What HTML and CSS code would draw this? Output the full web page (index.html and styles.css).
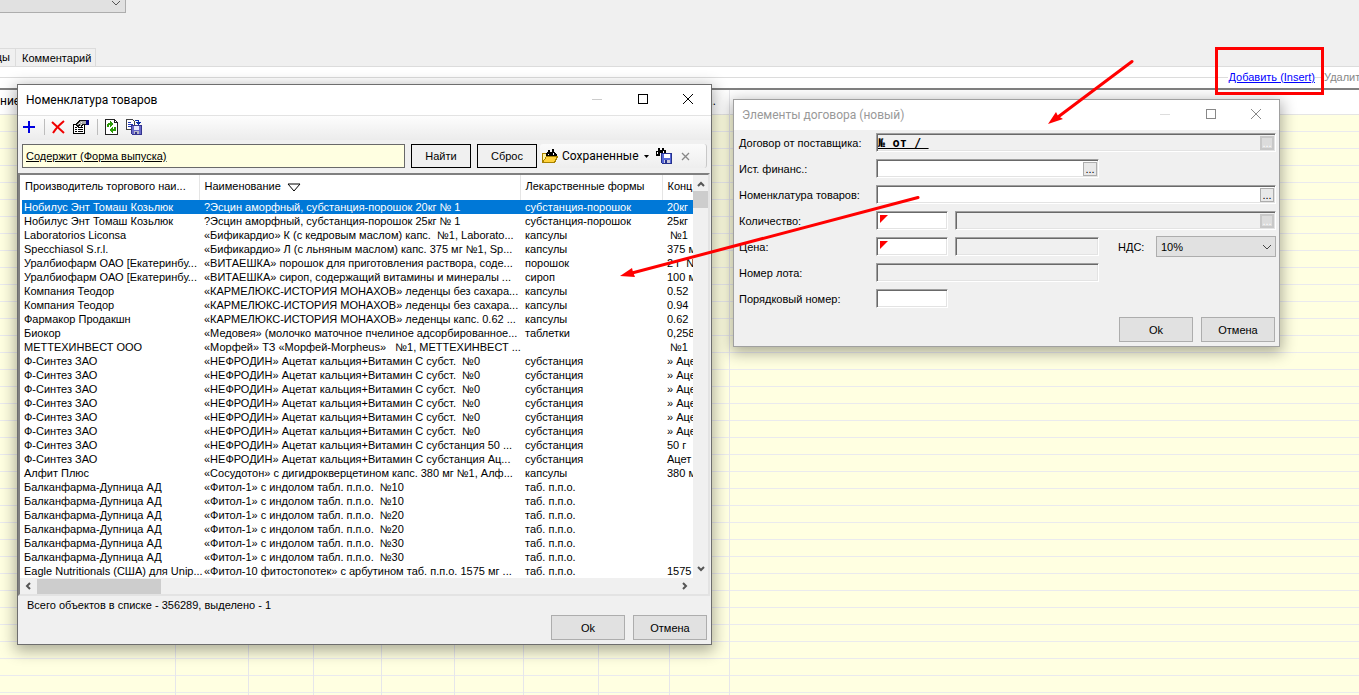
FILE: index.html
```
<!DOCTYPE html>
<html lang="ru">
<head>
<meta charset="utf-8">
<title>Номенклатура товаров</title>
<link rel="stylesheet" href="styles.css">
</head>
<body>
<main class="desktop">
  <header class="top">
    <button class="top-combo" type="button" aria-label="Список">
      <svg width="10" height="6" viewBox="0 0 10 6"><path d="M1 1l4 4 4-4" fill="none" stroke="#555"/></svg>
    </button>
    <nav class="tabs">
      <button class="tab tab-cut" type="button">цы</button>
      <button class="tab" type="button">Комментарий</button>
    </nav>
  </header>
  <div class="actions">
    <a class="add" href="#">Добавить (Insert)</a>
    <button class="remove" type="button" disabled>Удалить</button>
  </div>
  <section class="sheet">
    <div class="col c1"><div class="col-head">ние</div></div>
    <div class="col c2"><div class="col-head"></div></div>
    <div class="col c3"><div class="col-head"></div></div>
    <div class="col c4"><div class="col-head"></div></div>
    <div class="col c5"><div class="col-head"></div></div>
    <div class="col c6"><div class="col-head"></div></div>
    <div class="col c7"><div class="col-head"></div></div>
    <div class="col c8"><div class="col-head"></div></div>
    <div class="col c9"><div class="col-head">...</div></div>
    <div class="col rest"><div class="col-head"></div></div>
  </section>

  <section class="window catalog">
    <div class="title">
      <h1>Номенклатура товаров</h1>
      <svg class="controls" width="104" height="12" viewBox="0 0 104 12" fill="none" shape-rendering="crispEdges">
        <path d="M0 5.500h10" stroke="#ccc"/><rect x="46.500" y="0.500" width="9" height="9" stroke="#000"/>
        <path d="M91 0l10 10M101 0L91 10" stroke="#000" shape-rendering="auto"/>
      </svg>
    </div>
    <div class="toolbar">
      <button type="button" class="tool" aria-label="Добавить"><svg width="16" height="16" viewBox="0 0 16 16"><path d="M7 2h2v5h5v2H9v5H7V9H2V7h5z" fill="#0000e0"/></svg></button>
      <span class="sep"></span>
      <button type="button" class="tool" aria-label="Удалить"><svg width="16" height="16" viewBox="0 0 16 16"><path d="M2 3l12 11M14 2C9 6 6 9 3 14" fill="none" stroke="#f00000" stroke-width="2"/></svg></button>
      <button type="button" class="tool" aria-label="Свойства"><svg width="18" height="16" viewBox="0 0 18 16" shape-rendering="crispEdges"><path d="M1.500 5.500h11v9h-11z" fill="#fff" stroke="#000"/><path d="M3 8h2M6 8h5M3 10h2M6 10h5M3 12h2M6 12h5" stroke="#000" transform="translate(0 .5)"/><path d="M4 5l4-4h6v5h-3l-2 2-1-2-2 2z" fill="#aaa"/><path d="M4 5.500l4-4h6M4 5.500L6 7.500l2-2M9 7.500l2-2h3" fill="none" stroke="#111"/><path d="M7 4h1v1H7zM9 3h1v1H9zM9 5h1v1H9z" fill="#eee"/><path d="M14 1h3v5h-3z" fill="#000080"/></svg></button>
      <span class="sep"></span>
      <button type="button" class="tool" aria-label="Обновить"><svg width="16" height="16" viewBox="0 0 16 16" shape-rendering="crispEdges"><path d="M2.500.5h9l3 3v12h-12z" fill="#fff" stroke="#222"/><path d="M11.500.5v3h3" fill="none" stroke="#222"/><path d="M4 8V5l1-1h2V2l4 3-4 3V6H6v2zM13 8v3l-1 1h-2v2l-4-3 4-3v2h1V8z" fill="#2c9a08"/></svg></button>
      <button type="button" class="tool" aria-label="Экспорт"><svg width="18" height="16" viewBox="0 0 18 16" shape-rendering="crispEdges"><path d="M1.500.5h6l2 2v8h-8z" fill="#fff" stroke="#444"/><path d="M3 3.500h3M3 5.500h5M3 7.500h5" stroke="#2238b8"/><path d="M10 1.500h3v2" fill="none" stroke="#0b2ca8"/><path d="M11 3h5l-2.500 3z" fill="#0b2ca8"/><path d="M6.500 6.500h10v9h-9l-1-1z" fill="#6868c8" stroke="#34348e"/><path d="M9 7h5v4H9z" fill="#e8e8ff"/><path d="M9 12h5v3H9z" fill="#b8b8c8"/><path d="M10 13h2v2h-2z" fill="#34348e"/></svg></button>
    </div>
    <div class="filter">
      <button class="criteria" type="button">Содержит (Форма выпуска)</button>
      <button class="flat" type="button">Найти</button>
      <button class="flat" type="button">Сброс</button>
      <div class="saved-strip">
        <button class="saved" type="button"><svg width="16" height="16" viewBox="0 0 16 16" shape-rendering="crispEdges"><path d="M0.500 14.500v-9h4l1 1h4v3" fill="#fff2a0" stroke="#a88200"/><path d="M5 4h1V2h2v2h2V1h2v3h1l2 3v2H4V6z" fill="#000"/><path d="M6 6h1v1H6zM11 5h1v2h-1z" fill="#fff"/><path d="M.5 14.500l4-6h11l-3 6z" fill="#ffd23c" stroke="#a88200"/></svg><span>Сохраненные</span><svg width="5" height="3" viewBox="0 0 5 3"><path d="M0 0h5L2.500 3z"/></svg></button>
        <button class="tool" type="button" aria-label="Сохранить поиск"><svg width="18" height="16" viewBox="0 0 18 16" shape-rendering="crispEdges"><path d="M2 0h2v2h2V0h2v2h2v5H6V5H4v3H0V3h2z" fill="#000"/><path d="M1 4h1v2H1zM7 3h1v2H7z" fill="#fff"/><path d="M5.500 5.500h10v10h-9l-1-1z" fill="#5668d8" stroke="#26328e"/><path d="M8 6h6v4H8z" fill="#fff"/><path d="M8 12h6v3H8z" fill="#ccd"/><path d="M9 12h2v3H9z" fill="#26328e"/></svg></button>
        <button class="tool" type="button" aria-label="Очистить"><svg width="9" height="9" viewBox="0 0 9 9"><path d="M1 1l7 7M8 1L1 8" fill="none" stroke="#888" stroke-width="1.300"/></svg></button>
      </div>
    </div>
    <div class="list">
      <div class="list-view">
        <table>
          <colgroup><col class="k1"><col class="k2"><col class="k3"><col></colgroup>
          <thead><tr><th>Производитель торгового наи...</th><th>Наименование <svg width="14" height="9" viewBox="0 0 14 9"><path d="M1 1h12L7 8z" fill="#fff" stroke="#000"/></svg></th><th>Лекарственные формы</th><th>Конц</th></tr></thead>
          <tbody>
<tr class="selected"><td>Нобилус Энт Томаш Козьлюк</td><td>?Эсцин аморфный, субстанция-порошок 20кг № 1</td><td>субстанция-порошок</td><td>20кг</td></tr>
<tr><td>Нобилус Энт Томаш Козьлюк</td><td>?Эсцин аморфный, субстанция-порошок 25кг № 1</td><td>субстанция-порошок</td><td>25кг</td></tr>
<tr><td>Laboratorios Liconsa</td><td>«Бификардио» К (с кедровым маслом) капс.  №1, Laborato...</td><td>капсулы</td><td> №1</td></tr>
<tr><td>Specchiasol S.r.l.</td><td>«Бификардио» Л (с льняным маслом) капс. 375 мг №1, Sp...</td><td>капсулы</td><td>375 м</td></tr>
<tr><td>Уралбиофарм ОАО [Екатеринбу...</td><td>«ВИТАЕШКА» порошок для приготовления раствора, соде...</td><td>порошок</td><td>2 г  N</td></tr>
<tr><td>Уралбиофарм ОАО [Екатеринбу...</td><td>«ВИТАЕШКА» сироп, содержащий витамины и минералы ...</td><td>сироп</td><td>100 м</td></tr>
<tr><td>Компания Теодор</td><td>«КАРМЕЛЮКС-ИСТОРИЯ МОНАХОВ» леденцы без сахара...</td><td>капсулы</td><td>0.52</td></tr>
<tr><td>Компания Теодор</td><td>«КАРМЕЛЮКС-ИСТОРИЯ МОНАХОВ» леденцы без сахара...</td><td>капсулы</td><td>0.94</td></tr>
<tr><td>Фармакор Продакшн</td><td>«КАРМЕЛЮКС-ИСТОРИЯ МОНАХОВ» леденцы капс. 0.62 ...</td><td>капсулы</td><td>0.62</td></tr>
<tr><td>Биокор</td><td>«Медовея» (молочко маточное пчелиное адсорбированное...</td><td>таблетки</td><td>0,258</td></tr>
<tr><td>МЕТТЕХИНВЕСТ ООО</td><td>«Морфей» ТЗ «Морфей-Morpheus»   №1, МЕТТЕХИНВЕСТ ...</td><td></td><td> №1</td></tr>
<tr><td>Ф-Синтез ЗАО</td><td>«НЕФРОДИН» Ацетат кальция+Витамин С субст.  №0</td><td>субстанция</td><td>» Аце</td></tr>
<tr><td>Ф-Синтез ЗАО</td><td>«НЕФРОДИН» Ацетат кальция+Витамин С субст.  №0</td><td>субстанция</td><td>» Аце</td></tr>
<tr><td>Ф-Синтез ЗАО</td><td>«НЕФРОДИН» Ацетат кальция+Витамин С субст.  №0</td><td>субстанция</td><td>» Аце</td></tr>
<tr><td>Ф-Синтез ЗАО</td><td>«НЕФРОДИН» Ацетат кальция+Витамин С субст.  №0</td><td>субстанция</td><td>» Аце</td></tr>
<tr><td>Ф-Синтез ЗАО</td><td>«НЕФРОДИН» Ацетат кальция+Витамин С субст.  №0</td><td>субстанция</td><td>» Аце</td></tr>
<tr><td>Ф-Синтез ЗАО</td><td>«НЕФРОДИН» Ацетат кальция+Витамин С субст.  №0</td><td>субстанция</td><td>» Аце</td></tr>
<tr><td>Ф-Синтез ЗАО</td><td>«НЕФРОДИН» Ацетат кальция+Витамин С субстанция 50 ...</td><td>субстанция</td><td>50 г</td></tr>
<tr><td>Ф-Синтез ЗАО</td><td>«НЕФРОДИН» Ацетат кальция+Витамин С субстанция Ац...</td><td>субстанция</td><td>Ацет</td></tr>
<tr><td>Алфит Плюс</td><td>«Сосудотон» с дигидрокверцетином капс. 380 мг №1, Алф...</td><td>капсулы</td><td>380 м</td></tr>
<tr><td>Балканфарма-Дупница АД</td><td>«Фитол-1» с индолом табл. п.п.о.  №10</td><td>таб. п.п.о.</td><td></td></tr>
<tr><td>Балканфарма-Дупница АД</td><td>«Фитол-1» с индолом табл. п.п.о.  №10</td><td>таб. п.п.о.</td><td></td></tr>
<tr><td>Балканфарма-Дупница АД</td><td>«Фитол-1» с индолом табл. п.п.о.  №20</td><td>таб. п.п.о.</td><td></td></tr>
<tr><td>Балканфарма-Дупница АД</td><td>«Фитол-1» с индолом табл. п.п.о.  №20</td><td>таб. п.п.о.</td><td></td></tr>
<tr><td>Балканфарма-Дупница АД</td><td>«Фитол-1» с индолом табл. п.п.о.  №30</td><td>таб. п.п.о.</td><td></td></tr>
<tr><td>Балканфарма-Дупница АД</td><td>«Фитол-1» с индолом табл. п.п.о.  №30</td><td>таб. п.п.о.</td><td></td></tr>
<tr><td>Eagle Nutritionals (США) для Unip...</td><td>«Фитол-10 фитостопотек» с арбутином таб. п.п.о. 1575 мг ...</td><td>таб. п.п.о.</td><td>1575</td></tr>
          </tbody>
        </table>
      </div>
      <div class="vscroll">
        <svg width="8" height="6" viewBox="0 0 8 6"><path d="M1 5l3-3 3 3" fill="none" stroke="#555" stroke-width="2"/></svg>
        <span class="thumb"></span>
        <svg width="8" height="6" viewBox="0 0 8 6"><path d="M1 1l3 3 3-3" fill="none" stroke="#555" stroke-width="2"/></svg>
      </div>
      <div class="hscroll">
        <svg width="6" height="8" viewBox="0 0 6 8"><path d="M5 1L2 4l3 3" fill="none" stroke="#555" stroke-width="2"/></svg>
        <span class="thumb"></span>
        <svg width="6" height="8" viewBox="0 0 6 8"><path d="M1 1l3 3-3 3" fill="none" stroke="#555" stroke-width="2"/></svg>
      </div>
    </div>
    <p class="status">Всего объектов в списке - 356289, выделено - 1</p>
    <div class="buttons"><button class="btn" type="button">Ok</button><button class="btn" type="button">Отмена</button></div>
  </section>

  <form class="window contract">
    <div class="title">
      <h1>Элементы договора (новый)</h1>
      <svg class="controls" width="104" height="12" viewBox="0 0 104 12" fill="none" shape-rendering="crispEdges">
        <path d="M0 5.500h10" stroke="#ddd"/><rect x="46.500" y="0.500" width="9" height="9" stroke="#888"/>
        <path d="M91 0l10 10M101 0L91 10" stroke="#888" shape-rendering="auto"/>
      </svg>
    </div>
    <div class="rows">
      <div class="row"><label for="f1">Договор от поставщика:</label><div class="field grow gray"><input id="f1" class="bold" value="№ от / " readonly><button class="dots" type="button" disabled>...</button></div></div>
      <div class="row"><label for="f2">Ист. финанс.:</label><div class="field medium"><input id="f2"><button class="dots" type="button">...</button></div></div>
      <div class="row"><label for="f3">Номенклатура товаров:</label><div class="field grow"><input id="f3"><button class="dots" type="button">...</button></div></div>
      <div class="row"><label for="f4">Количество:</label><div class="field short required"><input id="f4"></div><div class="field grow gray"><input aria-label="Единица" readonly><button class="dots" type="button" disabled>...</button></div></div>
      <div class="row"><label for="f5">Цена:</label><div class="field short required"><input id="f5"></div><div class="field unit gray"><input aria-label="Валюта" readonly></div>
        <label class="vat-label" for="vat">НДС:</label><div class="vat"><select id="vat"><option>10%</option></select><svg width="10" height="6" viewBox="0 0 10 6"><path d="M1 1l4 4 4-4" fill="none" stroke="#444"/></svg></div></div>
      <div class="row"><label for="f6">Номер лота:</label><div class="field medium gray"><input id="f6" readonly></div></div>
      <div class="row"><label for="f7">Порядковый номер:</label><div class="field short"><input id="f7"></div></div>
    </div>
    <div class="buttons"><button class="btn" type="button">Ok</button><button class="btn" type="button">Отмена</button></div>
  </form>

  <svg class="marks" width="1359" height="695" viewBox="0 0 1359 695">
    <rect x="1216.500" y="48.500" width="106" height="45" fill="none" stroke="#f00" stroke-width="3"/>
    <path d="M1132 61.500L1058 117M918 197.500L632 273" fill="none" stroke="#f00" stroke-width="3" stroke-linecap="round"/>
    <path d="M1048 124l8-12 2 4 5 3zM620 276l12-8 1 4 2 5z" fill="#f00"/>
  </svg>
</main>
</body>
</html>
```
FILE: styles.css
```
* { box-sizing: border-box; }
body { margin: 0; font: 11px/14px "Liberation Sans", Arial, sans-serif; color: #000; background: #f0f0f0; }
button, input, select { font: inherit; color: inherit; margin: 0; padding: 0; border: 0; border-radius: 0; background: none; }
svg { display: block; flex: none; }
h1, p { margin: 0; }

.desktop { position: relative; display: flex; flex-direction: column; min-height: 100vh; overflow: hidden; }

.top { display: flex; flex-direction: column; justify-content: space-between; align-items: flex-start; height: 67px; border-bottom: 1px solid #dcdcdc; }
.top-combo { display: flex; justify-content: flex-end; width: 126px; height: 13px; padding: 0 4px; background: #e1e1e1; border: 1px solid #adadad; border-top: 0; border-left: 0; }
.tabs { display: flex; }
.tab { height: 18px; padding: 1px 4px 0 6px; border: 1px solid #dcdcdc; border-bottom: 0; border-left: 0; }
.tab-cut { width: 16px; padding: 1px 5px 0 0; display: flex; justify-content: flex-end; }

.actions { display: flex; justify-content: flex-end; align-items: center; gap: 9px; height: 21px; padding-bottom: 2px; background: linear-gradient(#dcdcdc, #dcdcdc) 0 10px / 100% 1px no-repeat #fff; }
.add { color: #00f; background: #fff; }
.remove { width: 35px; overflow: hidden; color: #888; text-align: left; background: #fff; }

.sheet { flex: 1; display: flex; border-top: 2px solid #808080; background: repeating-linear-gradient(#ffffe1 0 16px, #eaeaee 16px 17px) 0 25px; }
.col { border-right: 1px solid #e6e6ea; }
.col-head { height: 25px; padding-top: 4px; font: 12px/14px Roboto, sans-serif; background: #fff; border-bottom: 1px solid #e5e5e5; }
.c1 { width: 176px; }
.c2, .c5 { width: 73px; }
.c3 { width: 65px; }
.c4 { width: 68px; }
.c6 { width: 69px; }
.c7 { width: 75px; }
.c8 { width: 71px; }
.c9 { width: 60px; }
.c9 .col-head { padding-right: 13px; text-align: right; }
.rest { flex: 1; border-right: 0; }

.window { position: absolute; border: 1px solid #6e6e6e; background: #f0f0f0; box-shadow: 0 4px 14px 2px rgba(0, 0, 0, .32); }
.catalog { left: 17px; top: 84px; width: 695px; }
.contract { left: 733px; top: 99px; width: 547px; border-color: #a0a0a0; }
.title { display: flex; align-items: center; justify-content: space-between; height: 30px; padding: 0 15px 0 8px; background: #fff; }
.title h1 { font: 12px/16px Roboto, sans-serif; }
.contract .title h1 { color: #999; }

.toolbar { display: flex; align-items: center; gap: 6px; height: 25px; padding: 0 3px 2px; border-top: 1px solid #e3e3e3; background: linear-gradient(#fdfdfd, #ececec); }
.tool { display: flex; }
.sep { width: 1px; height: 16px; margin: 0 -1px 0 1px; background: #bdbdbd; }

.filter { display: flex; gap: 6px; height: 33px; padding: 4px 4px 5px; }
.criteria { flex: 1; padding-left: 3px; border: 1px solid #696969; background: #ffffe1; text-align: left; text-decoration: underline; }
.flat { width: 60px; border: 1px solid #000; }
.saved-strip { display: flex; align-items: center; gap: 7px; width: 167px; margin-left: -3px; padding-left: 2px; border-radius: 3px; border-right: 1px solid #c8c8c8; background: linear-gradient(#fbfbfb, #eee); }
.saved { display: flex; align-items: center; gap: 4px; font: 12px/16px Roboto, sans-serif; }
.saved span { width: 78px; text-align: left; }

.list { display: grid; grid-template-columns: 1fr 15px; margin-right: 1px; border: 2px solid; border-color: #808080 #e3e3e3 #e3e3e3 #808080; background: #fff; }
.list-view { overflow: hidden; }
table { width: 100%; table-layout: fixed; border-collapse: collapse; }
.k1 { width: 179px; }
.k2 { width: 321px; }
.k3 { width: 142px; }
th { height: 25px; padding: 0 0 4px 5px; font-weight: normal; text-align: left; white-space: nowrap; border-right: 1px solid #e5e5e5; }
th:last-child { border-right: 0; }
th svg { display: inline-block; margin-left: 3px; vertical-align: -2px; }
td { height: 14px; padding: 0 0 0 4px; line-height: 14px; white-space: pre; }
td + td { padding-left: 5px; }
.selected { color: #fff; background: linear-gradient(#0078d7, #0078d7) 2px 0 no-repeat; }
.vscroll { display: flex; flex-direction: column; align-items: center; padding: 6px 0; background: #f0f0f0; }
.vscroll .thumb { width: 15px; height: 17px; margin: 4px 0 auto; background: #cdcdcd; }
.hscroll { grid-column: 1 / -1; display: flex; align-items: center; height: 16px; padding: 0 20px 0 5px; background: #f0f0f0; }
.hscroll .thumb { width: 124px; height: 15px; margin: 0 auto 0 6px; background: #cdcdcd; }

.status { padding: 2px 9px 0; }
.buttons { display: flex; justify-content: flex-end; gap: 8px; padding: 3px 4px 4px; }
.btn { width: 74px; height: 25px; border: 1px solid #adadad; background: #e1e1e1; }

.rows { display: flex; flex-direction: column; gap: 7px; padding: 3px 3px 6px 5px; }
.row { display: flex; align-items: center; height: 19px; }
.row > label:first-child { width: 137px; }
.field { position: relative; display: flex; align-items: center; height: 19px; padding: 0 1px; background: #fff; border: 1px solid; border-color: #a0a0a0 #fff #fff #a0a0a0; box-shadow: inset 1px 1px #696969, inset -1px -1px #e3e3e3; }
.field.gray { background: #f0f0f0; }
.field input { flex: 1; min-width: 0; height: 15px; outline: 0; }
.grow { flex: 1; }
.medium { width: 223px; }
.short { width: 72px; margin-right: 7px; }
.unit { width: 144px; }
.required::before { content: ""; position: absolute; left: 3px; top: 3px; border: 4px solid; border-color: #f00 transparent transparent #f00; }
.field .bold { font: bold 12px/14px "DejaVu Sans Mono", monospace; text-decoration: underline; }
.dots { width: 14px; height: 14px; border: 1px solid #adadad; background: #e9e9e9; line-height: 10px; }
.dots:disabled { background: #dcdcdc; border: 2px solid #c8c8c8; color: #fff; line-height: 8px; }
.vat-label { margin-left: 19px; width: 38px; }
.vat { flex: 1; display: flex; align-items: center; position: relative; }
.vat select { width: 100%; height: 21px; padding: 0 4px; appearance: none; border: 1px solid #adadad; background: #e1e1e1; }
.vat svg { position: absolute; right: 4px; pointer-events: none; }

.marks { position: absolute; left: 0; top: 0; pointer-events: none; }
```
